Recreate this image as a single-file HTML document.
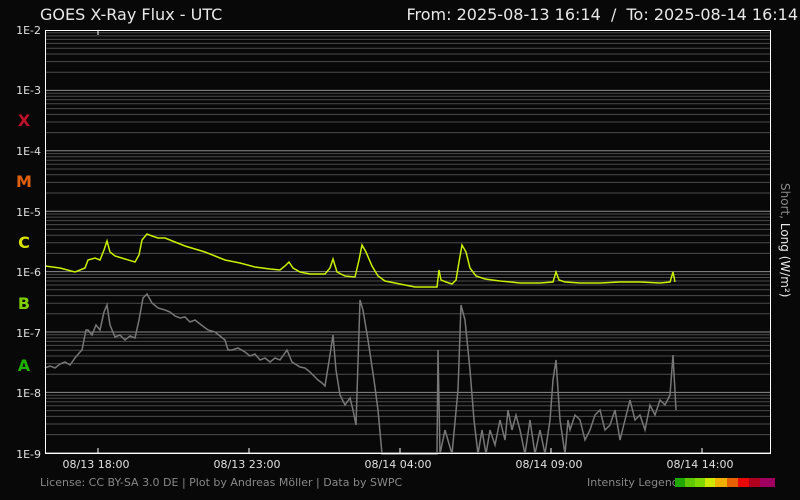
<!DOCTYPE html>
<html><head><meta charset="utf-8"><style>
html,body{margin:0;padding:0;background:#080808;width:800px;height:500px;overflow:hidden}
svg{display:block}
text{font-family:"DejaVu Sans","Liberation Sans",sans-serif}
</style></head><body>
<svg id="s" width="800" height="500" xmlns="http://www.w3.org/2000/svg">
<rect width="800" height="500" fill="#080808"/>
<g id="grid"></g>
<text x="40" y="20" fill="#e8e8e8" font-size="16">GOES X-Ray Flux - UTC</text>
<text x="798" y="20" fill="#e8e8e8" font-size="16" text-anchor="end" style="white-space:pre">From: 2025-08-13 16:14  /  To: 2025-08-14 16:14</text>
<g fill="#e0e0e0" font-size="11" text-anchor="end">
<text x="41" y="34">1E-2</text><text x="41" y="94">1E-3</text><text x="41" y="155">1E-4</text><text x="41" y="216">1E-5</text><text x="41" y="276">1E-6</text><text x="41" y="337">1E-7</text><text x="41" y="397">1E-8</text><text x="41" y="458">1E-9</text>
</g>
<g font-size="16" text-anchor="middle" font-weight="bold">
<text x="24" y="126" fill="#c0102a">X</text>
<text x="24" y="187" fill="#e06010">M</text>
<text x="24" y="248" fill="#d8e000">C</text>
<text x="24" y="309" fill="#80d000">B</text>
<text x="24" y="371" fill="#20b000">A</text>
</g>
<polyline fill="none" stroke="#777" stroke-width="1.5" points="45,368 50,366 55,368 60,364 65,362 70,365 75,358 80,352 82,350 86,330 88,330 92,335 96,325 100,330 104,312 107,305 110,325 115,337 120,335 125,340 130,336 135,338 139,320 143,298 147,294 152,303 158,308 165,310 170,312 175,316 180,318 185,317 190,322 195,320 200,324 208,330 215,332 220,336 225,340 228,350 232,350 238,348 245,352 250,356 255,354 260,360 265,358 270,362 275,358 280,360 287,350 292,362 300,367 305,368 310,372 315,377 318,380 322,383 325,386 330,355 333,335 336,370 340,395 345,405 350,398 353,410 356,425 360,300 363,310 368,340 374,380 378,410 382,454 437,454 438,350 440,454 445,430 452,454 458,390 461,305 465,320 470,370 474,420 478,454 482,430 486,454 490,430 495,445 500,420 505,440 508,410 512,430 516,415 520,430 525,454 530,420 535,454 540,430 545,454 550,420 553,380 556,360 560,420 565,454 568,420 570,430 575,415 580,420 585,440 590,430 595,415 600,410 605,430 610,425 615,410 620,440 625,420 630,400 635,420 640,415 645,430 650,405 655,415 660,400 665,405 670,395 673,355 676,410"/>
<polyline fill="none" stroke="#c8f000" stroke-width="1.5" points="45,266 60,268 75,272 85,268 88,260 95,258 100,260 104,250 107,241 110,252 115,256 125,259 135,262 139,255 142,240 147,234 152,236 158,238 165,238 175,242 185,246 195,249 205,252 215,256 225,260 240,263 255,267 270,269 280,270 285,266 289,262 293,268 300,272 310,274 325,274 330,268 333,259 337,272 345,276 355,277 359,260 362,245 366,252 372,266 378,276 385,281 400,284 415,287 437,287 439,270 441,280 446,282 452,284 456,280 459,262 462,245 466,252 470,268 476,276 485,279 500,281 520,283 540,283 553,282 556,272 559,280 565,282 580,283 600,283 620,282 640,282 660,283 670,282 673,272 675,282"/>
<rect x="45.5" y="30.5" width="725" height="423" fill="none" stroke="#fff" stroke-width="1"/>
<g stroke="#fff"><line x1="98" y1="31" x2="98" y2="35"/><line x1="98" y1="448" x2="98" y2="453"/><line x1="249" y1="448" x2="249" y2="453"/><line x1="400" y1="448" x2="400" y2="453"/><line x1="551" y1="448" x2="551" y2="453"/><line x1="702" y1="448" x2="702" y2="453"/></g>
<g fill="#e0e0e0" font-size="11" text-anchor="middle">
<text x="96" y="468">08/13 18:00</text><text x="247" y="468">08/13 23:00</text><text x="398" y="468">08/14 04:00</text><text x="549" y="468">08/14 09:00</text><text x="700" y="468">08/14 14:00</text>
</g>
<text x="40" y="486" fill="#888" font-size="11">License: CC BY-SA 3.0 DE | Plot by Andreas Möller | Data by SWPC</text>
<text x="587" y="486" fill="#888" font-size="11">Intensity Legend</text>
<g>
<rect x="675" y="478" width="10" height="9" fill="#20a800"/><rect x="685" y="478" width="10" height="9" fill="#60c800"/><rect x="695" y="478" width="10" height="9" fill="#80d800"/><rect x="705" y="478" width="10" height="9" fill="#d0e800"/><rect x="715" y="478" width="12" height="9" fill="#f0b000"/><rect x="727" y="478" width="11" height="9" fill="#e86000"/><rect x="738" y="478" width="11" height="9" fill="#e80808"/><rect x="749" y="478" width="11" height="9" fill="#b00020"/><rect x="760" y="478" width="15" height="9" fill="#a00060"/>
</g>
<text transform="translate(781,183) rotate(90)" font-size="12"><tspan fill="#888">Short, </tspan><tspan fill="#e8e8e8">Long (W/m²)</tspan></text>
</svg>
<script>
var g=document.getElementById('grid'),h='';
for(var d=0;d<7;d++){var base=30+d*60.4;
for(var k=1;k<=9;k++){var y=base+60.4*(1-Math.log10(k));
var c=k==1?'#8a8a8a':'#4a4a4a';
h+='<line x1="45" x2="770" y1="'+y.toFixed(1)+'" y2="'+y.toFixed(1)+'" stroke="'+c+'" stroke-width="1"/>';}}
g.innerHTML=h;
</script>
</body></html>
